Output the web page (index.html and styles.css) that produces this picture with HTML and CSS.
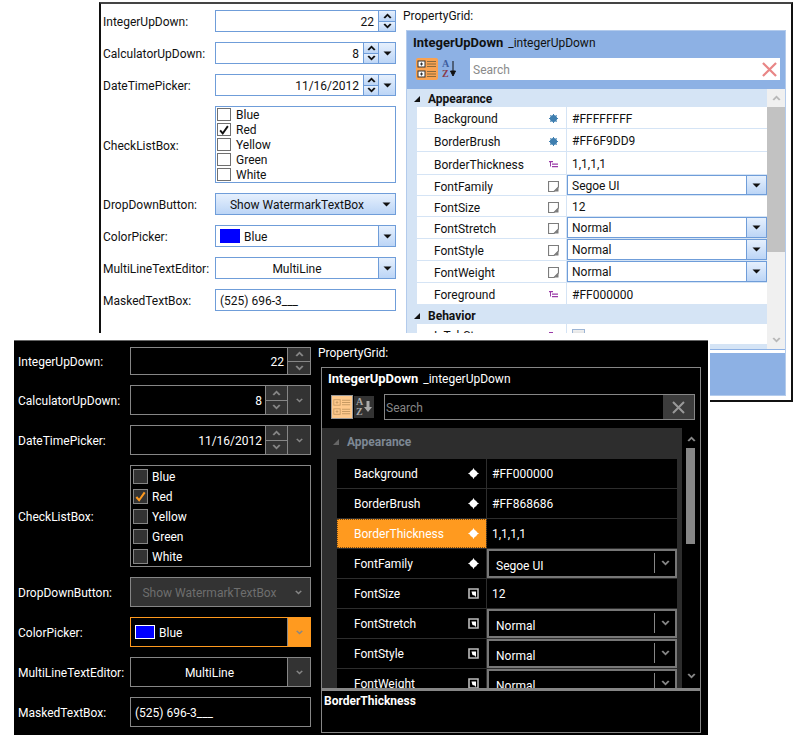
FILE: index.html
```html
<!DOCTYPE html>
<html lang="en">
<head>
    <meta charset="UTF-8">
    <meta name="viewport" content="width=device-width, initial-scale=1.0">
    <title>Extended WPF Toolkit Themes</title>
    <link rel="stylesheet" href="styles.css">
</head>
<body>

    <svg class="sprite" xmlns="http://www.w3.org/2000/svg">
        <symbol id="arrow-up" viewBox="0 0 9 6"><path d="M4.5 0.5 L8.5 4.5 L7 5.5 L4.5 3 L2 5.5 L0.5 4.5 Z"/></symbol>
        <symbol id="arrow-down" viewBox="0 0 9 6"><path d="M4.5 5.5 L8.5 1.5 L7 0.5 L4.5 3 L2 0.5 L0.5 1.5 Z"/></symbol>
        <symbol id="caret" viewBox="0 0 9 5"><path d="M0.5 0.5 H8.5 L4.5 4.5 Z"/></symbol>
        <symbol id="check" viewBox="0 0 14 14"><path d="M2.5 7.5 L5.5 11 L11.5 2.5" fill="none" stroke="currentColor" stroke-width="2.2"/></symbol>
        <symbol id="gear" viewBox="0 0 9 9"><circle cx="4.5" cy="4.5" r="3.6"/><path d="M4.5 0 V9 M0 4.5 H9 M1.3 1.3 L7.7 7.7 M7.7 1.3 L1.3 7.7" stroke="currentColor" stroke-width="1"/></symbol>
        <symbol id="tree" viewBox="0 0 9 7"><path d="M0 0 H4 V1.200 H0 Z M1 1 H2 V5.500 H1 Z M3 2.500 H9 V3.700 H3 Z M3 5 H9 V6.200 H3 Z"/></symbol>
        <symbol id="sheet" viewBox="0 0 11 11"><path d="M0.5 0.5 H10.500 V6 L6 10.500 H0.500 Z" fill="#fff" stroke="currentColor" stroke-width="1.200"/><path d="M10.500 6 V10.500 H6 Z"/></symbol>
        <symbol id="sparkle" viewBox="0 0 11 11"><path d="M5.500 0 L7.500 3.500 L11 5.500 L7.500 7.500 L5.500 11 L3.500 7.500 L0 5.500 L3.500 3.500 Z"/><circle cx="5.500" cy="5.500" r="3.600"/></symbol>
        <symbol id="sheet-dark" viewBox="0 0 11 11"><path d="M1 1 H10 V10 H1 Z" fill="none" stroke="#bbb" stroke-width="1.600"/><path d="M3.500 3.500 H8 V9 L6.500 7.500 L4.500 7 Z"/></symbol>
        <symbol id="expanded" viewBox="0 0 7 7"><path d="M7 0 V7 H0 Z"/></symbol>
        <symbol id="categorized" viewBox="0 0 22 22">
            <rect class="cat-box" x="2" y="3" width="7" height="6"/>
            <rect class="cat-box" x="2" y="13" width="7" height="6"/>
            <path class="cat-plus" d="M4 6 H7 M5.500 4.500 V7.500 M4 16 H7 M5.500 14.500 V17.500"/>
            <path d="M11 3.500 H20 M11 6 H20 M11 8.500 H20 M11 13.500 H20 M11 16 H20 M11 18.500 H20" stroke="currentColor" stroke-width="1.200"/>
        </symbol>
    </svg>

    <!-- light theme window -->
    <div class="window light">
        <div class="form">
            <div class="field"><label>IntegerUpDown:</label>
                <div class="control">
                    <span class="text right">22</span>
                    <span class="spin"><span class="half"><svg class="chev"><use href="#arrow-up"/></svg></span><span class="half"><svg class="chev"><use href="#arrow-down"/></svg></span></span>
                </div>
            </div>
            <div class="field"><label>CalculatorUpDown:</label>
                <div class="control">
                    <span class="text right">8</span>
                    <span class="spin"><span class="half"><svg class="chev"><use href="#arrow-up"/></svg></span><span class="half"><svg class="chev"><use href="#arrow-down"/></svg></span></span>
                    <span class="drop"><svg class="caret"><use href="#caret"/></svg></span>
                </div>
            </div>
            <div class="field"><label>DateTimePicker:</label>
                <div class="control">
                    <span class="text right">11/16/2012</span>
                    <span class="spin"><span class="half"><svg class="chev"><use href="#arrow-up"/></svg></span><span class="half"><svg class="chev"><use href="#arrow-down"/></svg></span></span>
                    <span class="drop"><svg class="caret"><use href="#caret"/></svg></span>
                </div>
            </div>
            <div class="field"><label>CheckListBox:</label>
                <ul class="checklist">
                    <li><span class="box"></span>Blue</li>
                    <li><span class="box"><svg><use href="#check"/></svg></span>Red</li>
                    <li><span class="box"></span>Yellow</li>
                    <li><span class="box"></span>Green</li>
                    <li><span class="box"></span>White</li>
                </ul>
            </div>
            <div class="field"><label>DropDownButton:</label>
                <div class="control dropbutton">
                    <span class="text center">Show WatermarkTextBox</span>
                    <span class="plain-drop"><svg class="caret"><use href="#caret"/></svg></span>
                </div>
            </div>
            <div class="field"><label>ColorPicker:</label>
                <div class="control">
                    <span class="text"><span class="swatch"></span>Blue</span>
                    <span class="drop"><svg class="caret"><use href="#caret"/></svg></span>
                </div>
            </div>
            <div class="field"><label>MultiLineTextEditor:</label>
                <div class="control">
                    <span class="text center">MultiLine</span>
                    <span class="drop"><svg class="caret"><use href="#caret"/></svg></span>
                </div>
            </div>
            <div class="field"><label>MaskedTextBox:</label>
                <div class="control"><span class="text">(525) 696-3___</span></div>
            </div>
        </div>

        <div class="prop">
            <div class="prop-label">PropertyGrid:</div>
            <div class="panel">
                <div class="panel-title"><b>IntegerUpDown</b> _integerUpDown</div>
                <div class="toolbar">
                    <span class="tool active"><svg><use href="#categorized"/></svg></span>
                    <span class="tool sort"><span class="az"><i>A</i><i>Z</i></span><svg viewBox="0 0 6 16"><path d="M3 0 V13 M0.500 10 L3 15 L5.500 10 Z"/></svg></span>
                    <div class="search"><span>Search</span>
                        <svg class="clear" viewBox="0 0 16 16"><path d="M1 1 L15 15 M15 1 L1 15"/></svg>
                    </div>
                </div>
                <div class="main">
                    <div class="list">
                        <div class="cat"><svg><use href="#expanded"/></svg>Appearance</div>
                        <div class="row"><span class="name">Background</span><span class="mark gear"><svg><use href="#gear"/></svg></span><span class="val">#FFFFFFFF</span></div>
                        <div class="row tall"><span class="name">BorderBrush</span><span class="mark gear"><svg><use href="#gear"/></svg></span><span class="val">#FF6F9DD9</span></div>
                        <div class="row tall"><span class="name">BorderThickness</span><span class="mark tree"><svg><use href="#tree"/></svg></span><span class="val">1,1,1,1</span></div>
                        <div class="row short"><span class="name">FontFamily</span><span class="mark sheet"><svg><use href="#sheet"/></svg></span><span class="val"><span class="combo">Segoe UI<span class="drop"><svg class="caret"><use href="#caret"/></svg></span></span></span></div>
                        <div class="row short"><span class="name">FontSize</span><span class="mark sheet"><svg><use href="#sheet"/></svg></span><span class="val">12</span></div>
                        <div class="row"><span class="name">FontStretch</span><span class="mark sheet"><svg><use href="#sheet"/></svg></span><span class="val"><span class="combo">Normal<span class="drop"><svg class="caret"><use href="#caret"/></svg></span></span></span></div>
                        <div class="row"><span class="name">FontStyle</span><span class="mark sheet"><svg><use href="#sheet"/></svg></span><span class="val"><span class="combo">Normal<span class="drop"><svg class="caret"><use href="#caret"/></svg></span></span></span></div>
                        <div class="row"><span class="name">FontWeight</span><span class="mark sheet"><svg><use href="#sheet"/></svg></span><span class="val"><span class="combo">Normal<span class="drop"><svg class="caret"><use href="#caret"/></svg></span></span></span></div>
                        <div class="row"><span class="name">Foreground</span><span class="mark tree"><svg><use href="#tree"/></svg></span><span class="val">#FF000000</span></div>
                        <div class="cat behavior"><svg><use href="#expanded"/></svg>Behavior</div>
                        <div class="row"><span class="name">IsTabStop</span><span class="mark tree"><svg><use href="#tree"/></svg></span><span class="val"><span class="mini-check"></span></span></div>
                    </div>
                    <div class="scrollbar">
                        <svg class="chev"><use href="#arrow-up"/></svg>
                        <div class="track"><div class="thumb"></div></div>
                        <svg class="chev"><use href="#arrow-down"/></svg>
                    </div>
                </div>
                <div class="desc"></div>
            </div>
        </div>
    </div>

    <!-- dark theme window, pasted over the light one -->
    <div class="paste">
        <div class="window dark">
            <div class="form">
                <div class="field short-field"><label>IntegerUpDown:</label>
                    <div class="control">
                        <span class="text right">22</span>
                        <span class="spin"><span class="half"><svg class="chev"><use href="#arrow-up"/></svg></span><span class="half"><svg class="chev"><use href="#arrow-down"/></svg></span></span>
                    </div>
                </div>
                <div class="field"><label>CalculatorUpDown:</label>
                    <div class="control">
                        <span class="text right">8</span>
                        <span class="spin"><span class="half"><svg class="chev"><use href="#arrow-up"/></svg></span><span class="half"><svg class="chev"><use href="#arrow-down"/></svg></span></span>
                        <span class="drop"><svg class="caret"><use href="#arrow-down"/></svg></span>
                    </div>
                </div>
                <div class="field"><label>DateTimePicker:</label>
                    <div class="control">
                        <span class="text right">11/16/2012</span>
                        <span class="spin"><span class="half"><svg class="chev"><use href="#arrow-up"/></svg></span><span class="half"><svg class="chev"><use href="#arrow-down"/></svg></span></span>
                        <span class="drop"><svg class="caret"><use href="#arrow-down"/></svg></span>
                    </div>
                </div>
                <div class="field"><label>CheckListBox:</label>
                    <ul class="checklist">
                        <li><span class="box"></span>Blue</li>
                        <li><span class="box"><svg><use href="#check"/></svg></span>Red</li>
                        <li><span class="box"></span>Yellow</li>
                        <li><span class="box"></span>Green</li>
                        <li><span class="box"></span>White</li>
                    </ul>
                </div>
                <div class="field"><label>DropDownButton:</label>
                    <div class="control dropbutton">
                        <span class="text center">Show WatermarkTextBox</span>
                        <span class="plain-drop"><svg class="caret"><use href="#arrow-down"/></svg></span>
                    </div>
                </div>
                <div class="field"><label>ColorPicker:</label>
                    <div class="control focused">
                        <span class="text"><span class="swatch"></span>Blue</span>
                        <span class="drop"><svg class="caret"><use href="#arrow-down"/></svg></span>
                    </div>
                </div>
                <div class="field"><label>MultiLineTextEditor:</label>
                    <div class="control">
                        <span class="text center">MultiLine</span>
                        <span class="drop"><svg class="caret"><use href="#arrow-down"/></svg></span>
                    </div>
                </div>
                <div class="field"><label>MaskedTextBox:</label>
                    <div class="control"><span class="text">(525) 696-3___</span></div>
                </div>
            </div>

            <div class="prop">
                <div class="prop-label">PropertyGrid:</div>
                <div class="panel">
                    <div class="panel-title"><b>IntegerUpDown</b> _integerUpDown</div>
                    <div class="toolbar">
                        <span class="tool active"><svg><use href="#categorized"/></svg></span>
                        <span class="tool sort"><span class="az"><i>A</i><i>Z</i></span><svg viewBox="0 0 8 12"><path d="M2.500 0 H5.500 V6 H8 L4 11 L0 6 H2.500 Z"/></svg></span>
                        <div class="search"><span>Search</span>
                            <span class="clear-btn"><svg class="clear" viewBox="0 0 13 13"><path d="M1 1 L12 12 M12 1 L1 12"/></svg></span>
                        </div>
                    </div>
                    <div class="main">
                        <div class="list">
                            <div class="cat"><svg><use href="#expanded"/></svg>Appearance</div>
                            <div class="row"><span class="name">Background</span><span class="mark"><svg><use href="#sparkle"/></svg></span><span class="val">#FF000000</span></div>
                            <div class="row"><span class="name">BorderBrush</span><span class="mark"><svg><use href="#sparkle"/></svg></span><span class="val">#FF868686</span></div>
                            <div class="row selected"><span class="name">BorderThickness</span><span class="mark"><svg><use href="#sparkle"/></svg></span><span class="val">1,1,1,1</span></div>
                            <div class="row"><span class="name">FontFamily</span><span class="mark"><svg><use href="#sparkle"/></svg></span><span class="val"><span class="combo">Segoe UI<span class="drop"><svg class="caret"><use href="#arrow-down"/></svg></span></span></span></div>
                            <div class="row"><span class="name">FontSize</span><span class="mark"><svg><use href="#sheet-dark"/></svg></span><span class="val">12</span></div>
                            <div class="row"><span class="name">FontStretch</span><span class="mark"><svg><use href="#sheet-dark"/></svg></span><span class="val"><span class="combo">Normal<span class="drop"><svg class="caret"><use href="#arrow-down"/></svg></span></span></span></div>
                            <div class="row"><span class="name">FontStyle</span><span class="mark"><svg><use href="#sheet-dark"/></svg></span><span class="val"><span class="combo">Normal<span class="drop"><svg class="caret"><use href="#arrow-down"/></svg></span></span></span></div>
                            <div class="row"><span class="name">FontWeight</span><span class="mark"><svg><use href="#sheet-dark"/></svg></span><span class="val"><span class="combo">Normal<span class="drop"><svg class="caret"><use href="#arrow-down"/></svg></span></span></span></div>
                        </div>
                        <div class="scrollbar">
                            <svg class="chev"><use href="#arrow-up"/></svg>
                            <div class="track"><div class="thumb"></div></div>
                            <svg class="chev"><use href="#arrow-down"/></svg>
                        </div>
                    </div>
                    <div class="desc"><b>BorderThickness</b></div>
                </div>
            </div>
        </div>
    </div>

</body>
</html>
```

FILE: styles.css
```css
body {
    margin: 0;
    background-color: #fff;
    font-family: Roboto, "Open Sans", sans-serif;
    font-size: 12px;
    overflow: hidden;
}

.sprite {
    display: none;
}

svg {
    fill: currentColor;
    display: block;
}

/* Screenshots of the two windows lie on a free canvas */
.window {
    box-sizing: border-box;
    position: absolute;
    display: flex;
}

.light {
    left: 99px;
    top: 2px;
    width: 694px;
    height: 400px;
    border: 2px solid #111;
    border-top-color: #444;
    background-color: #fff;
    color: #111;
    padding: 6px 0 0 2px;
    --line: #6f9dd9;
    --tool-fill: #fff;
    --tool-line: #333;
}

.paste {
    position: absolute;
    left: 14px;
    top: 333px;
    width: 696px;
    height: 402px;
    background-color: #fff;
}

.dark {
    left: 0;
    top: 7px;
    width: 694px;
    height: 395px;
    border-top: 1px solid #666;
    background-color: #000;
    color: #fff;
    padding: 6px 0 0 4px;
    --line: #868686;
    --tool-fill: none;
    --tool-line: #c79a63;
}

.cat-box {
    fill: var(--tool-fill);
    stroke: var(--tool-line);
}

.cat-plus {
    stroke: var(--tool-line);
}

/* Left column with labels and editors */
.form {
    width: 293px;
    flex-shrink: 0;
    display: flex;
    flex-direction: column;
    gap: 10px;
}

.field {
    display: grid;
    grid-template-columns: 112px 181px;
    align-items: center;
    min-height: 22px;
}

.field label {
    padding-top: 2px;
}

.dark .field {
    min-height: 30px;
}

.dark .short-field {
    min-height: 28px;
}

.control {
    box-sizing: border-box;
    display: flex;
    align-items: stretch;
    border: 1px solid var(--line);
    height: 22px;
}

.dark .control {
    height: 30px;
}

.dark .short-field .control {
    height: 28px;
}

.text {
    flex: 1;
    display: flex;
    align-items: center;
    padding: 2px 4px 0;
    white-space: nowrap;
}

.text.right {
    justify-content: flex-end;
}

.text.center {
    justify-content: center;
}

.spin {
    box-sizing: border-box;
    display: flex;
    flex-direction: column;
    width: 17px;
    border-left: 1px solid var(--line);
}

.spin:has(+ .drop) {
    width: 15px;
}

.half {
    flex: 1;
    display: flex;
    align-items: center;
    justify-content: center;
    background: linear-gradient(#e6f0fd, #bcd5f6);
}

.half + .half {
    border-top: 1px solid var(--line);
}

.chev {
    width: 9px;
    height: 6px;
}

.drop {
    box-sizing: border-box;
    display: flex;
    align-items: center;
    justify-content: center;
    width: 17px;
    border-left: 1px solid var(--line);
    background: linear-gradient(#e6f0fd, #bcd5f6);
}

.caret {
    width: 9px;
    height: 5px;
}

.plain-drop {
    display: flex;
    align-items: center;
    justify-content: center;
    width: 17px;
}

.light .dropbutton {
    background: linear-gradient(#e6f0fd, #bcd5f6);
}

.swatch {
    box-sizing: border-box;
    width: 20px;
    height: 14px;
    margin: -2px 4px 0 0;
    background-color: #00f;
}

.checklist {
    box-sizing: border-box;
    list-style: none;
    margin: 0;
    padding: 1px 0 0 1px;
    height: 77px;
    border: 1px solid var(--line);
}

.checklist li {
    display: flex;
    align-items: flex-start;
    height: 15px;
    line-height: 14px;
}

.box {
    box-sizing: border-box;
    width: 14px;
    height: 13px;
    margin-right: 5px;
    border: 1px solid #707070;
}

.box svg {
    width: 12px;
    height: 12px;
}

/* Property grid */
.prop {
    margin-left: 7px;
    width: 383px;
}

.prop-label {
    height: 20px;
    line-height: 12px;
}

.panel {
    box-sizing: border-box;
    width: 380px;
    margin-left: 3px;
    height: 366px;
    border: 1px solid #b3cbec;
    background-color: #8db1e4;
    display: flex;
    flex-direction: column;
}

.panel-title {
    padding: 3px 0 0 6px;
    height: 26px;
    box-sizing: border-box;
    line-height: 17px;
}

.panel-title b {
    font-size: 13px;
    margin-right: 2px;
}

.toolbar {
    display: flex;
    align-items: center;
    height: 24px;
    padding: 0 5px 0 9px;
}

.tool {
    width: 22px;
    height: 22px;
    display: flex;
    align-items: center;
    justify-content: center;
}

.tool svg {
    width: 22px;
    height: 22px;
}

.active {
    background-color: #f9a251;
    border-radius: 2px;
    color: #8a6a3d;
}

.sort {
    width: 18px;
    margin-left: 2px;
    gap: 1px;
}

.sort svg {
    width: 6px;
    height: 16px;
    stroke: currentColor;
}

.az {
    display: flex;
    flex-direction: column;
    font: bold 10px/10px "Liberation Serif", serif;
}

.az i {
    font-style: normal;
    color: #3f5f9f;
}

.az i + i {
    color: #8a3a4a;
}

.search {
    flex: 1;
    height: 22px;
    margin-left: 12px;
    display: flex;
    align-items: center;
    justify-content: space-between;
    padding: 0 3px;
    background-color: #fff;
    color: #8a8a8a;
}

.search > span:first-child {
    padding-top: 2px;
}

.clear {
    width: 15px;
    height: 15px;
    fill: none;
    stroke: #e98686;
    stroke-width: 2.4;
}

.main {
    display: flex;
    margin-top: 8px;
    height: 260px;
    background-color: #fff;
    flex-shrink: 0;
}

.list {
    box-sizing: border-box;
    flex: 1;
    overflow: hidden;
    height: 260px;
    padding-left: 10px;
    border-bottom: 5px solid #d5e4f5;
    background-color: #d5e4f5;
}

.cat {
    box-sizing: border-box;
    display: flex;
    align-items: center;
    height: 18px;
    margin-left: -10px;
    padding: 2px 0 0 7px;
    background-color: #d5e4f5;
    font-weight: 700;
}

.behavior {
    height: 19px;
}

.cat svg {
    width: 6px;
    height: 6px;
    margin-right: 8px;
}

.row {
    box-sizing: border-box;
    display: grid;
    grid-template-columns: 150px 1fr;
    height: 22px;
    background-color: #fff;
    border-bottom: 1px solid #d5e4f5;
}

.row.tall {
    height: 23px;
}

.row.short {
    height: 21px;
}

.name {
    display: flex;
    align-items: center;
    padding: 3px 0 0 17px;
    border-right: 1px solid #d5e4f5;
    grid-column: 1;
    grid-row: 1;
}

.mark {
    grid-column: 1;
    grid-row: 1;
    justify-self: end;
    align-self: center;
    margin-right: 9px;
    padding-top: 2px;
}

.mark svg {
    width: 9px;
    height: 9px;
}

.gear {
    color: #3f7fb0;
}

.tree {
    color: #9a3aa8;
}

.tree svg {
    height: 7px;
}

.sheet {
    color: #7c7c7c;
    margin-right: 8px;
}

.sheet svg {
    width: 11px;
    height: 11px;
}

.val {
    display: flex;
    align-items: center;
    padding: 2px 0 0 5px;
    grid-column: 2;
    grid-row: 1;
}

.val:has(.combo) {
    padding: 0;
    align-items: stretch;
}

.combo {
    box-sizing: border-box;
    flex: 1;
    display: flex;
    align-items: center;
    justify-content: space-between;
    padding: 1px 0 0 4px;
    border: 1px solid var(--line);
}

.combo .drop {
    align-self: stretch;
    width: 20px;
    margin-top: -1px;
}

.mini-check {
    width: 11px;
    height: 11px;
    border: 1px solid #9db5d5;
    background: linear-gradient(#f0f0f0, #c8c8c8);
}

.scrollbar {
    width: 18px;
    flex-shrink: 0;
    display: flex;
    flex-direction: column;
    align-items: center;
    background-color: #f0f0f0;
    color: #b8b8b8;
}

.scrollbar .chev {
    height: 18px;
    padding: 6px 0;
    box-sizing: border-box;
}

.track {
    flex: 1;
    width: 100%;
}

.thumb {
    height: 145px;
    background-color: #c2c2c2;
}

.desc {
    flex: 1;
}

.light .desc {
    margin-top: 1px;
    border-top: 3px solid #fff;
}

/* Dark theme overrides */
.dark .spin,
.dark .drop {
    width: 23px;
    background: #333;
    color: #868686;
}

.dark .spin:has(+ .drop) {
    width: 22px;
}

.dark .half {
    background: #333;
    color: #868686;
}

.dark .dropbutton {
    background-color: #333;
    color: #6e6e6e;
}

.dark .plain-drop {
    width: 23px;
    color: #868686;
}

.dark .text {
    padding: 2px 3px 0 4px;
}

.dark .focused {
    border-color: #ff9a1f;
}

.dark .focused .drop {
    background-color: #ff9a1f;
    border-left-color: #868686;
}

.dark .swatch {
    border: 1px solid #fff;
}

.dark .checklist {
    height: 102px;
    padding: 0 0 0 2px;
}

.dark .checklist li {
    height: 20px;
    align-items: center;
    padding-top: 2px;
    box-sizing: border-box;
}

.dark .box {
    width: 15px;
    height: 15px;
    margin: -2px 4px 0 0;
    background-color: #333;
    border-color: #868686;
    color: #ff9a1f;
}

.dark .box svg {
    width: 13px;
    height: 13px;
}

.dark .panel {
    border-color: #868686;
    background-color: #000;
}

.dark .panel-title {
    padding-top: 2px;
}

.dark .toolbar {
    height: 26px;
    padding-left: 9px;
    padding-right: 5px;
}

.dark .active {
    background-color: #ffc98c;
    border: 1px solid #999;
    border-radius: 0;
    box-sizing: border-box;
    width: 22px;
    height: 24px;
    color: #c79a63;
}

.dark .sort {
    width: 20px;
    height: 22px;
    margin-left: 1px;
    background-color: #333;
    color: #aaa;
}

.dark .sort svg {
    width: 8px;
    height: 12px;
    stroke: none;
}

.dark .az i {
    color: #aaa;
}

.dark .search {
    height: 26px;
    margin-left: 10px;
    padding: 0 0 0 1px;
    background-color: #000;
    border: 1px solid #868686;
    box-sizing: border-box;
    color: #868686;
}

.clear-btn {
    width: 31px;
    align-self: stretch;
    display: flex;
    align-items: center;
    justify-content: center;
    background-color: #3c3c3c;
}

.dark .clear {
    width: 13px;
    height: 13px;
    stroke: #999;
    stroke-width: 2;
}

.dark .main {
    background-color: #000;
}

.dark .list {
    padding: 0 5px 0 15px;
    border-bottom: 0;
    background-color: #2d2d2d;
}

.dark .cat {
    height: 31px;
    margin-left: -15px;
    margin-right: -5px;
    padding: 0 0 3px 11px;
    background-color: #2d2d2d;
    color: #7d8894;
}

.dark .cat svg {
    color: #666;
}

.dark .row {
    height: 30px;
    background-color: #000;
    border-bottom: 1px solid #2d2d2d;
}

.dark .name {
    padding-top: 0;
    border-right: 1px solid #2d2d2d;
}

.dark .mark {
    margin-right: 8px;
    padding-top: 0;
}

.dark .mark svg {
    width: 11px;
    height: 11px;
}

.dark .selected .name {
    background-color: #ff9a1f;
    outline: 1px dotted #7a4a10;
    outline-offset: -1px;
}

.dark .val {
    padding-top: 0;
}

.dark .val:has(.combo) {
    padding: 0;
}

.dark .combo {
    border: 2px solid #777;
    padding: 4px 0 0 7px;
}

.dark .combo .drop {
    background: none;
    border-left: 1px solid #868686;
    width: 21px;
    margin: -2px 0 3px;
    color: #868686;
}

.dark .combo .caret {
    height: 6px;
}

.dark .scrollbar {
    background-color: #000;
    color: #888;
    padding: 2px 0 3px;
}

.dark .thumb {
    width: 9px;
    height: 96px;
    margin-left: 4px;
    background-color: #868686;
}

.dark .desc {
    border-top: 3px solid #868686;
    padding: 3px 2px;
}
```
